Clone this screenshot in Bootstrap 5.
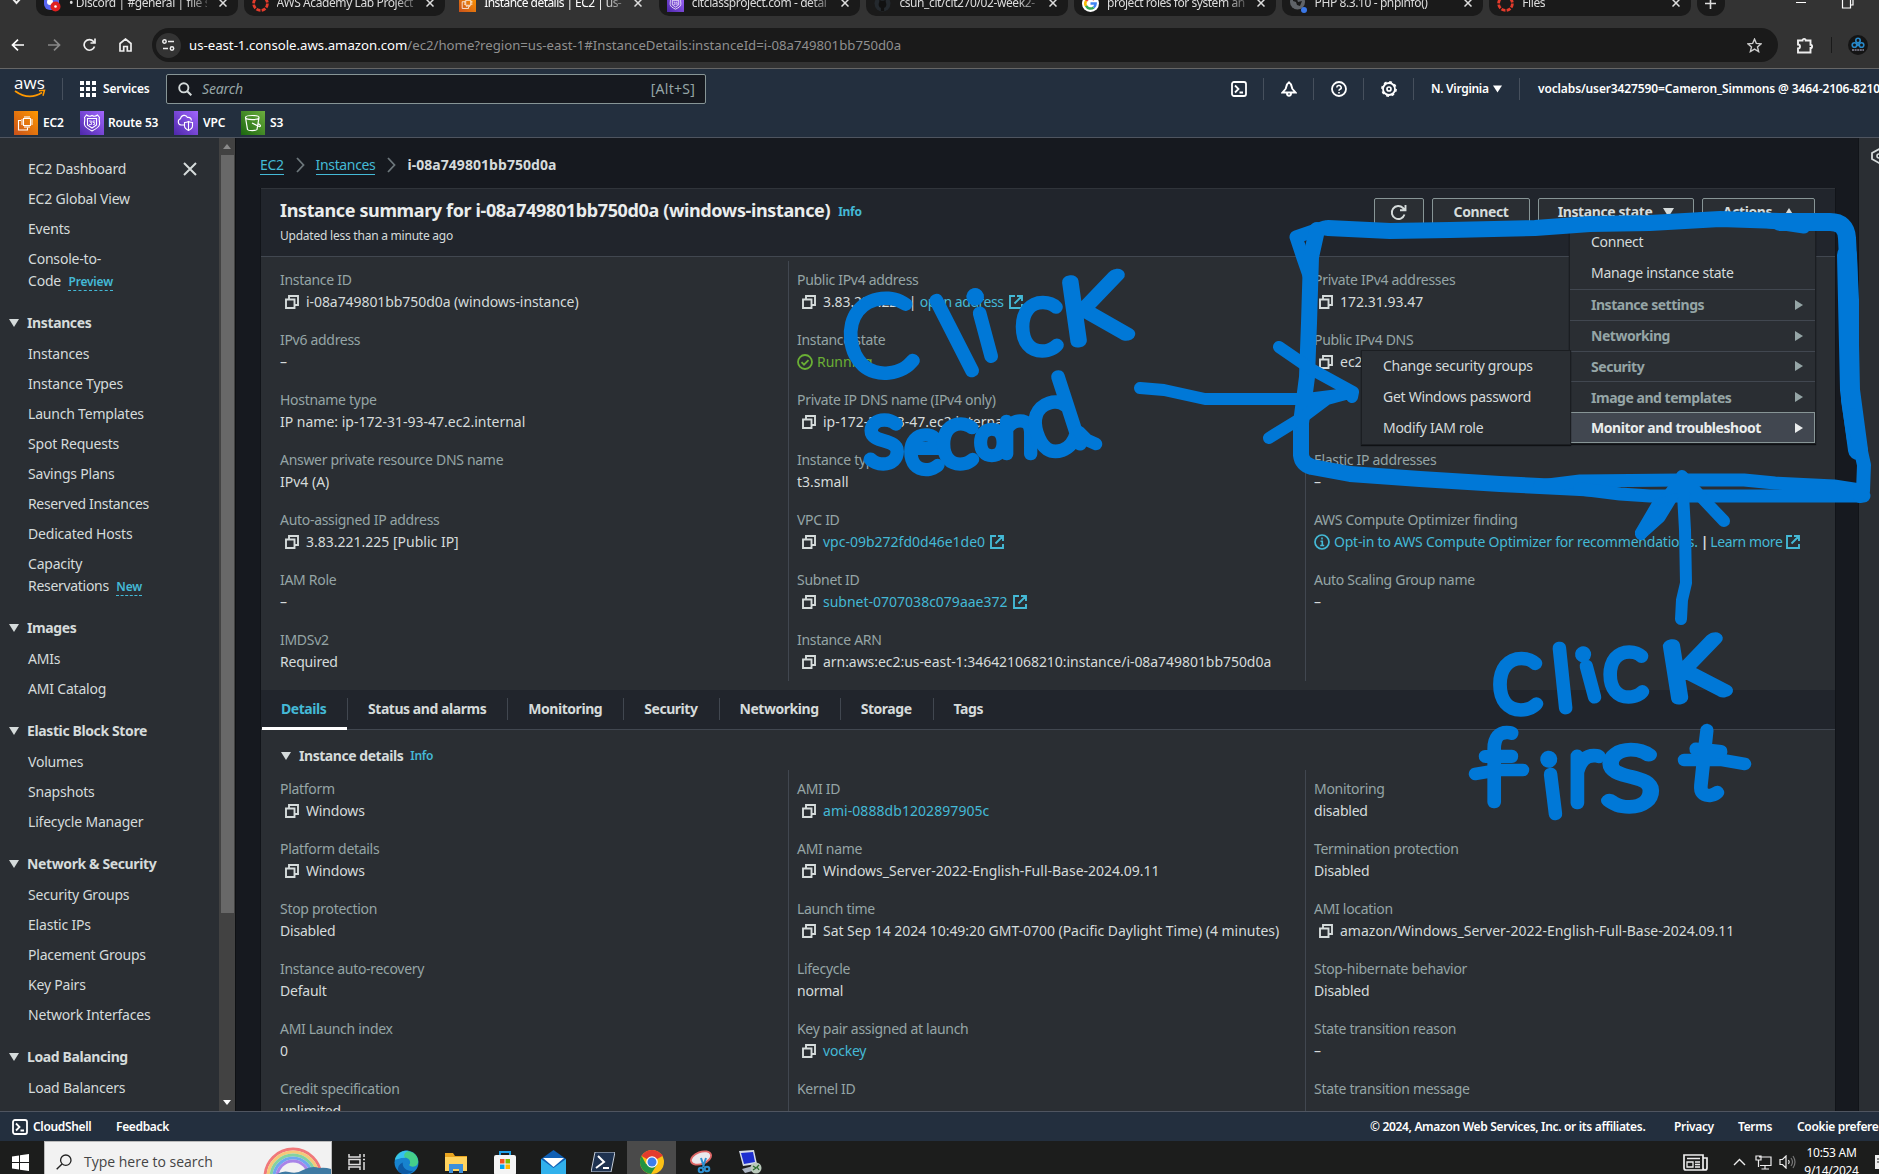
<!DOCTYPE html>
<html lang="en" data-bs-theme="dark">
<head>
<meta charset="utf-8">
<title>Instance details | EC2 | us-east-1</title>
<link href="https://cdn.jsdelivr.net/npm/bootstrap@5.3.0/dist/css/bootstrap.min.css" rel="stylesheet">
<style>
html,body{height:1174px;overflow:hidden}
body{width:1879px;margin:0;background:#16191f;color:#d5dbdb;font:14px/22px "Noto Sans","Open Sans",sans-serif;letter-spacing:-.2px;white-space:nowrap}
svg{display:block;flex:none}
a,a:not([href]):not([class]),a:not([href]):not([class]):hover{color:#44b9d6;text-decoration:none}
/* browser */
.chrome-win{height:68px;background:#333;border-bottom:0}
.tabstrip{height:16px;overflow:hidden;padding-left:36px}
.btab{flex:none;width:201.6px;height:26px;margin-right:6px;background:#1a1a1a;border-radius:10px;padding:0 11px 0 8px;font:12px/16px "Noto Sans",sans-serif;color:#dcdcdc;letter-spacing:-.4px}
.btab.on{background:none;color:#fff}
.btab .ttl{width:138px;margin-left:8px;overflow:hidden;-webkit-mask-image:linear-gradient(90deg,#000 86%,transparent 106%);mask-image:linear-gradient(90deg,#000 86%,transparent 106%)}
.btab .cls{margin-left:auto}
.plus{width:28px;height:26px;border-radius:12px;background:#1a1a1a}
.toolbar{height:34px;margin-top:12px;padding-left:11px}
.omni{width:1626px;height:34px;border-radius:17px;background:#1a1a1a;margin-left:20px;padding:0 16px 0 4px}
.siteinfo{width:25px;height:25px;border-radius:50%;background:#333}
.url{font:13.2px/18px "Noto Sans",sans-serif;letter-spacing:0;color:#8f8f8f;margin-left:8px}
.url b{font-weight:400;color:#fff}
/* console header */
.awsnav{height:70px;background:#232f3e;border-top:1px solid #666;border-bottom:1px solid #4f5560;font-size:12px;font-weight:600;color:#fff;letter-spacing:-.15px}
.awsrow{height:40px;padding-left:14px}
.awsrow>*,.favs>*,.foot>*,.tcell{flex:none}
.vr1{width:1px;height:22px;background:#46505d}
.aws-word{font:500 17px/12px "Open Sans",sans-serif;letter-spacing:.1px;color:#fff;margin-top:-3px}
.srch{width:540px;height:30px;background:#16191f;border:1px solid #879596;border-radius:2px;color:#95a5a6;font-weight:400;font-size:14px;padding:0 10px 0 11px}
.favs{height:24px;padding-left:14px;margin-top:2px}
/* body regions */
.mid{height:973px}
.side{width:219px;background:#2a2e33;padding:20px 0 0 28px;overflow:hidden}
.side div{margin-bottom:8px}
.side .grp{font-weight:700;letter-spacing:-.38px;margin:20px 0 9px -19px}
.side .grp svg{margin-right:8px}
.tag{font-size:12px;font-weight:600;color:#44b9d6;border-bottom:1px dashed #44b9d6;line-height:17px;display:inline-block;margin-left:4px}
.sbar{width:17px;background:#424242;border-right:1px solid #0f1114;padding:6px 0 6px 0}
.sthumb{width:13px;height:758px;background:#686868}
.maincol{width:1622px;padding:0 22px 0 24px;height:973px;overflow:hidden}
.bc{height:50px;padding-top:4px}
.bc a{border-bottom:1px solid #44b9d6;line-height:18px;letter-spacing:-.35px}
.bc b{letter-spacing:.05px}
.panel{width:1576px;background:#2a2e33;border-left:1px solid #111419;border-right:1px solid #111419}
.phead{height:69px;background:#21252c;border-top:1px solid #30343a;border-bottom:1px solid #414750;padding:8px 20px 0 19px;position:relative}
.phead h1{font-size:18px;line-height:26px;font-weight:700;letter-spacing:-.37px;margin:0;color:#eaeded}
.info{font-size:12px;font-weight:700;letter-spacing:-.25px}
.upd{font-size:12px;line-height:25px;letter-spacing:-.23px}
.abtn{height:28px;margin-top:1px;border:1px solid #879596;border-radius:2px;background:#2a2e33;font-weight:700;letter-spacing:-.4px;color:#d5dbdb;margin-right:8px}
.cols{padding-top:4px}
.fcol{border-left:1px solid #414750;padding:8px 0 8px 8px;height:420px}
.fcol.c1{width:527px;border-left:0;padding-left:19px}
.fcol.c2{width:517px}
.fcol.c3{width:530px}
dl{margin:0}
dt{font-weight:400;color:#95a5a6;letter-spacing:-.3px}
dd{margin:0 0 16px;display:flex;align-items:center;height:22px;letter-spacing:0}
dd.wd{letter-spacing:-.22px}
dd>.cp{margin:0 7px 0 5px}
.tabsrow{height:40px;margin-top:9px;background:#21252c;border-bottom:1px solid #414750;font-weight:700;letter-spacing:-.45px}
.tabsrow span{position:relative;padding:8px 21px 0 21px;height:40px}
.tabsrow span+span:before{content:"";position:absolute;left:0;top:8px;width:1px;height:22px;background:#414750}
.tabsrow .act{color:#44b9d6;border-bottom:3px solid #fff;width:85px;padding:8px 0 0 19px}
.menu{position:absolute;left:1308px;top:37px;width:247px;background:#2a2e33;border:1px solid #1b1e22;box-shadow:0 1px 1px #0f1114;z-index:3}
.mi{height:31px;padding:0 12px 0 21px;color:#d5dbdb;letter-spacing:-.28px;line-height:30px}
.mi.sub{height:30.8px;border-top:1px solid #414750;font-weight:700;color:#95a5a6;letter-spacing:-.47px;line-height:29px}
.mi.hot{background:#414750;border:1px solid #879596;color:#eaeded;padding:0 11px 0 21px;margin:0 0 0 -1px;letter-spacing:-.46px}
.menu2{left:1100px;top:161px;width:210px}
.rail{width:21px;background:#2a2e33;border-left:1px solid #111419}
.foot{height:30px;background:#232f3e;border-top:1px solid #4f5560;padding-left:12px;font-size:12px;font-weight:600;color:#fff;letter-spacing:-.33px;overflow:hidden}
.task{height:33px;background:#1c1d1c;overflow:hidden;color:#fff}
.tsearch{flex:none;width:288px;height:42px;background:#f2f2f2;border:1px solid #bbb;color:#444;font:14px/18px "Open Sans",sans-serif;letter-spacing:0}
.tcell{width:49px;height:42px}
.clock{font:12px/18px "Noto Sans",sans-serif;letter-spacing:-.3px;text-align:center}
.ink{position:absolute;left:0;top:0;pointer-events:none;z-index:10}
</style>
</head>
<body>
<svg width="0" height="0" class="position-absolute">
<symbol id="cp" viewBox="0 0 14 14"><path d="M1 4.5h8.5V13H1zM4 4V1h9v9H9.500" fill="none" stroke="#d5dbdb" stroke-width="1.9"/></symbol>
<symbol id="ext" viewBox="0 0 14 14"><path d="M6 1H1v12h12V9M8 1h5v5M12.500 1.500L5.500 8.500" fill="none" stroke="#44b9d6" stroke-width="1.9"/></symbol>
<symbol id="dn" viewBox="0 0 10 8"><path d="M0 0h10L5 8z" fill="currentColor"/></symbol>
<symbol id="rt" viewBox="0 0 8 10"><path d="M0 0v10L8 5z" fill="currentColor"/></symbol>
<symbol id="cs" viewBox="0 0 16 16"><g fill="none" stroke="#fff" stroke-width="1.8"><rect x="1" y="1" width="14" height="14" rx="2"/><path d="M4 4.500L7.500 8 4 11.500M8.500 11.500H12"/></g></symbol>
<symbol id="x" viewBox="0 0 8 8"><path d="M.5.5l7 7M7.500.5l-7 7" stroke="#ddd" stroke-width="1.5" fill="none"/></symbol>
<symbol id="canvas" viewBox="0 0 16 16"><circle cx="8" cy="8" r="6.500" fill="none" stroke="#e43b2c" stroke-width="2.600" stroke-dasharray="3.900 1.200"/></symbol>
<linearGradient id="go" x1="0" y1="1" x2="1" y2="0"><stop stop-color="#c8511b"/><stop offset="1" stop-color="#f90"/></linearGradient>
<linearGradient id="gp" x1="0" y1="1" x2="1" y2="0"><stop stop-color="#4d27aa"/><stop offset="1" stop-color="#a166ff"/></linearGradient>
<linearGradient id="gg" x1="0" y1="1" x2="1" y2="0"><stop stop-color="#1b660f"/><stop offset="1" stop-color="#6cae3e"/></linearGradient>
<symbol id="ec2" viewBox="0 0 24 24"><rect width="24" height="24" fill="url(#go)"/><path d="M9.500 7.500h7v7h-7zM11 7V5m2 2V5m2 2V5m-4 12v-2m2 2v-2m2 2v-2M9 9H7m2 2H7m2 2H7m12-4h-2m2 2h-2m2 2h-2M7 9.500H4.500v9.500h9v-2.500" fill="none" stroke="#fff" stroke-width="1.100"/></symbol>
<symbol id="r53" viewBox="0 0 24 24"><rect width="24" height="24" fill="url(#gp)"/><path d="M12 4.500c2 1.200 4 .8 5.500-.5L19.500 6.500c-1 2 .5 4 0 7C19 16.500 16 18 12 20c-4-2-7-3.500-7.500-6.500-.5-3 1-5 0-7L6.500 4c1.500 1.300 3.500 1.700 5.500.5zM7.500 7.500h9v6.500L12 17l-4.500-3z" fill="none" stroke="#fff" stroke-width="1.100"/><path d="M9 10h2.500l-1 1.500h1v2H9M15 10h-2v1.500h1.500v2H13" fill="none" stroke="#fff" stroke-width=".8"/></symbol>
</svg>

<header class="chrome-win">
 <div class="tabstrip d-flex align-items-end position-relative">
  <svg class="position-absolute" style="left:12px;top:-2px" width="9" height="7"><path d="M.5.5l4 4.500 4-4.500" fill="none" stroke="#eee" stroke-width="2"/></svg>
  <div class="btab d-flex align-items-center"><svg width="17" height="18" viewBox="0 0 17 18"><rect width="15" height="15" y="1" rx="6" fill="#5865f2"/><circle cx="6" cy="8" r="3" fill="#fff"/><circle cx="11.500" cy="12.500" r="5" fill="#e02020"/><circle cx="11.500" cy="12.500" r="1.300" fill="#fff"/></svg><div class="ttl">• Discord | #general | file s</div><svg class="cls" width="8" height="8"><use href="#x"/></svg></div>
  <div class="btab d-flex align-items-center"><svg width="17" height="17"><use href="#canvas"/></svg><div class="ttl">AWS Academy Lab Project</div><svg class="cls" width="8" height="8"><use href="#x"/></svg></div>
  <div class="btab on d-flex align-items-center"><svg width="17" height="17"><use href="#ec2"/></svg><div class="ttl" style="letter-spacing:-.55px">Instance details | EC2 | us-</div><svg class="cls" width="8" height="8"><use href="#x"/></svg></div>
  <div class="btab d-flex align-items-center"><svg width="17" height="17"><use href="#r53"/></svg><div class="ttl">citclassproject.com - detai</div><svg class="cls" width="8" height="8"><use href="#x"/></svg></div>
  <div class="btab d-flex align-items-center"><svg width="17" height="17" viewBox="0 0 16 16"><circle cx="8" cy="8" r="7.500" fill="#24292e"/><path d="M6.500 15v-3C4 11.500 4 8 5 6.500V4.500l2 1h2l2-1v2c1 1.500 1 5-1.500 5.500v3z" fill="#111"/></svg><div class="ttl">csun_cit/cit270/02-week2-</div><svg class="cls" width="8" height="8"><use href="#x"/></svg></div>
  <div class="btab d-flex align-items-center"><svg width="17" height="17" viewBox="0 0 16 16"><circle cx="8" cy="8" r="8" fill="#fff"/><g fill="none" stroke-width="2.400"><path d="M11.500 4.500A4.800 4.800 0 0 0 3.800 5.800" stroke="#ea4335"/><path d="M3.800 5.500a4.800 4.800 0 0 0 0 5" stroke="#fbbc05"/><path d="M3.800 10.300a4.800 4.800 0 0 0 7.200 1.400" stroke="#34a853"/><path d="M8 8h4.800a4.800 4.800 0 0 1-1.700 3.700" stroke="#4285f4"/></g></svg><div class="ttl" style="letter-spacing:-.45px">project roles for system an</div><svg class="cls" width="8" height="8"><use href="#x"/></svg></div>
  <div class="btab d-flex align-items-center"><svg width="17" height="20" viewBox="0 0 17 20"><circle cx="7.500" cy="9" r="7.500" fill="#5f6368"/><path d="M3 5l4 1 1 3 4-1-2 5-3-1-1-3-3-1z" fill="#1a1a1a"/><circle cx="14" cy="17" r="3" fill="#3b78e7"/></svg><div class="ttl">PHP 8.3.10 - phpinfo()</div><svg class="cls" width="8" height="8"><use href="#x"/></svg></div>
  <div class="btab d-flex align-items-center"><svg width="17" height="17"><use href="#canvas"/></svg><div class="ttl">Files</div><svg class="cls" width="8" height="8"><use href="#x"/></svg></div>
  <div class="plus d-flex align-items-center justify-content-center"><svg width="11" height="11"><path d="M5.500 0v11M0 5.500h11" stroke="#ddd" stroke-width="1.600"/></svg></div>
  <svg style="margin:0 0 6px 71px" width="60" height="12"><path d="M0 4.500h10" stroke="#fff"/><path d="M46.500-3v13h8V-3M49-2h8v9h-2" fill="none" stroke="#fff" stroke-width="1.200"/></svg>
 </div>
 <div class="toolbar d-flex align-items-center">
  <svg width="13" height="12"><path d="M7 .7L1.500 6 7 11.300M1.500 6H13" fill="none" stroke="#fff" stroke-width="1.700"/></svg>
  <svg style="margin-left:24px" width="13" height="12"><path d="M6 .7L11.500 6 6 11.300M11.500 6H0" fill="none" stroke="#888" stroke-width="1.700"/></svg>
  <svg style="margin-left:22px" width="13" height="14"><path d="M11.500 8.500A5.300 5.300 0 1 1 10.500 3.500L12 5M12 .5V5H7.500" fill="none" stroke="#eee" stroke-width="1.700"/></svg>
  <svg style="margin-left:23px" width="13" height="14"><path d="M1 5.500L6.500 1 12 5.500V13H8.300V8.500H4.700V13H1z" fill="none" stroke="#eee" stroke-width="1.700"/></svg>
  <div class="omni d-flex align-items-center">
   <div class="siteinfo d-flex align-items-center justify-content-center"><svg width="13" height="12"><g fill="none" stroke="#eee" stroke-width="1.500"><circle cx="2.500" cy="2.500" r="1.700"/><path d="M6 2.500h6M1 9.500h5"/><circle cx="10" cy="9.500" r="1.700"/></g></svg></div>
   <div class="url"><b>us-east-1.console.aws.amazon.com</b>/ec2/home?region=us-east-1#InstanceDetails:instanceId=i-08a749801bb750d0a</div>
   <svg class="ms-auto" width="15" height="15" viewBox="0 0 16 16"><path d="M8 1.200l2 4.600 5 .4-3.800 3.300 1.200 4.900L8 11.800l-4.400 2.600 1.200-4.900L1 6.200l5-.4z" fill="none" stroke="#ccc" stroke-width="1.500"/></svg>
  </div>
  <svg style="margin-left:19px" width="17" height="17"><path d="M1 3.500h4.500a1.600 1.600 0 0 1 3.200 0H13.500v4.300a1.600 1.600 0 0 1 0 3.200V15.500H1V11.500a2 2 0 0 0 0-4z" fill="none" stroke="#eee" stroke-width="1.900"/></svg>
  <div style="width:1px;height:16px;background:#1a1a1a;margin-left:17px"></div>
  <svg style="margin-left:16px" width="20" height="20"><circle cx="10" cy="10" r="10" fill="#141414"/><g fill="none" stroke="#2788c8" stroke-width="1.600"><circle cx="10" cy="5.500" r="2.200"/><circle cx="6.500" cy="10" r="2.300"/><circle cx="13.500" cy="10" r="2.300"/><path d="M10 7.500v2l-2 2M10 9.500l2 2"/></g><path d="M4 15h12" stroke="#889" stroke-width="1.600" stroke-dasharray="2 .6"/></svg>
 </div>
</header>

<nav class="awsnav">
 <div class="awsrow d-flex align-items-center">
  <div><div class="aws-word" style="width:32px">aws</div><svg width="32" height="9"><path d="M1 2Q15 12 28 3.500" fill="none" stroke="#f90" stroke-width="1.800"/><path d="M25 1.700l5.500-.4-1.500 5.500" fill="none" stroke="#f90" stroke-width="1.500"/></svg></div>
  <div class="vr1" style="margin-left:16px"></div>
  <svg style="margin:0 7px 0 17px" width="16" height="16" fill="#fff"><path d="M0 0h4v4H0zM6 0h4v4H6zM12 0h4v4h-4zM0 6h4v4H0zM6 6h4v4H6zM12 6h4v4h-4zM0 12h4v4H0zM6 12h4v4H6zM12 12h4v4h-4z"/></svg>
  <div style="width:63px">Services</div>
  <div class="srch d-flex align-items-center"><svg width="14" height="14"><circle cx="5.800" cy="5.800" r="4.600" fill="none" stroke="#d5dbdb" stroke-width="1.900"/><path d="M9 9l4.300 4.300" stroke="#d5dbdb" stroke-width="2"/></svg><i style="margin-left:10px">Search</i><span class="ms-auto" style="letter-spacing:.25px">[Alt+S]</span></div>
  <svg style="margin-left:525px" width="16" height="16"><use href="#cs"/></svg>
  <div class="vr1" style="margin:0 17px 0 16px"></div>
  <svg width="16" height="16"><path d="M8 1.200C5 3 5.500 6.500 4.500 8L1.500 11.500h13L11.500 8C10.500 6.500 11 3 8 1.200zM6 12.500a2 2.200 0 0 0 4 0" fill="none" stroke="#fff" stroke-width="1.900"/></svg>
  <div class="vr1" style="margin:0 17px 0 16px"></div>
  <svg width="16" height="16"><circle cx="8" cy="8" r="7" fill="none" stroke="#fff" stroke-width="1.800"/><path d="M5.800 6.500a2.200 2 0 1 1 3.200 1.800Q8 8.800 8 9.800M8 11v1.600" fill="none" stroke="#fff" stroke-width="1.600"/></svg>
  <div class="vr1" style="margin:0 17px 0 16px"></div>
  <svg width="16" height="16"><circle cx="8" cy="8" r="6" fill="none" stroke="#fff" stroke-width="1.800"/><circle cx="8" cy="8" r="7.100" fill="none" stroke="#fff" stroke-width="1.600" stroke-dasharray="2.800 2.780"/><circle cx="8" cy="8" r="2" fill="none" stroke="#fff" stroke-width="1.700"/></svg>
  <div class="vr1" style="margin:0 17px 0 16px"></div>
  <div style="width:62px;letter-spacing:-.3px">N. Virginia</div><svg width="9" height="8"><use href="#dn"/></svg>
  <div class="vr1" style="margin:0 18px 0 17px"></div>
  <div style="letter-spacing:-.13px">voclabs/user3427590=Cameron_Simmons @ 3464-2106-8210</div>
 </div>
 <div class="favs d-flex align-items-center">
  <svg width="24" height="24"><use href="#ec2"/></svg><span style="width:42px;padding-left:5px">EC2</span>
  <svg width="24" height="24"><use href="#r53"/></svg><span style="width:70px;padding-left:4px">Route 53</span>
  <svg width="24" height="24"><rect width="24" height="24" fill="url(#gp)"/><path d="M11 14H7a3.200 3.200 0 0 1-.5-6.200C7 4 12 3 13.500 6.500c3-.5 4 1.500 3.800 3M14.500 10.500c2 1 3 1 4 1v3.500c0 2-2 3.500-4 4.500-2-1-4-2.500-4-4.500v-3.500c1 0 2.500 0 4-1zm0 0v9" fill="none" stroke="#fff" stroke-width="1.100"/></svg><span style="width:43px;padding-left:5px">VPC</span>
  <svg width="24" height="24"><rect width="24" height="24" fill="url(#gg)"/><path d="M4.500 6.500l2 12c1 1.500 8.500 1.500 9.500 0l2-12M4.500 6.500c0 2.700 13.500 2.700 13.500 0s-13.500-2.700-13.500 0zM11 12l7 3.500c2.500.5 1.500-2-1-3" fill="none" stroke="#fff" stroke-width="1.200"/></svg><span style="padding-left:5px">S3</span>
 </div>
</nav>

<div class="mid d-flex">
 <aside class="side">
  <div class="d-flex align-items-center">EC2 Dashboard<svg style="margin-left:auto;margin-right:22px" width="14" height="14"><path d="M1 1l12 12M13 1L1 13" stroke="#d5dbdb" stroke-width="2"/></svg></div>
  <div>EC2 Global View</div><div>Events</div><div>Console-to-<br>Code <span class="tag">Preview</span></div>
  <div class="grp d-flex align-items-center"><svg width="10" height="8"><use href="#dn"/></svg>Instances</div>
  <div>Instances</div><div>Instance Types</div><div>Launch Templates</div><div>Spot Requests</div><div>Savings Plans</div><div style="letter-spacing:-.35px">Reserved Instances</div><div>Dedicated Hosts</div><div>Capacity<br><span style="letter-spacing:-.3px">Reservations</span> <span class="tag">New</span></div>
  <div class="grp d-flex align-items-center"><svg width="10" height="8"><use href="#dn"/></svg>Images</div>
  <div>AMIs</div><div>AMI Catalog</div>
  <div class="grp d-flex align-items-center"><svg width="10" height="8"><use href="#dn"/></svg>Elastic Block Store</div>
  <div>Volumes</div><div>Snapshots</div><div>Lifecycle Manager</div>
  <div class="grp d-flex align-items-center"><svg width="10" height="8"><use href="#dn"/></svg>Network &amp; Security</div>
  <div>Security Groups</div><div>Elastic IPs</div><div>Placement Groups</div><div>Key Pairs</div><div>Network Interfaces</div>
  <div class="grp d-flex align-items-center"><svg width="10" height="8"><use href="#dn"/></svg>Load Balancing</div>
  <div>Load Balancers</div>
 </aside>
 <div class="sbar d-flex flex-column align-items-center"><svg width="8" height="5"><path d="M0 5h8L4 0z" fill="#8a8a8a"/></svg><div class="sthumb" style="margin-top:6px"></div><svg class="mt-auto" width="8" height="5"><path d="M0 0h8L4 5z" fill="#fff"/></svg></div>
 <main class="maincol">
  <div class="bc d-flex align-items-center"><a>EC2</a><svg style="margin:0 11px 0 12px" width="9" height="16"><path d="M1 1l6.500 7L1 15" fill="none" stroke="#6d777b" stroke-width="1.800"/></svg><a>Instances</a><svg style="margin:0 11px 0 12px" width="9" height="16"><path d="M1 1l6.500 7L1 15" fill="none" stroke="#6d777b" stroke-width="1.800"/></svg><b>i-08a749801bb750d0a</b></div>
  <section class="panel">
   <div class="phead d-flex">
    <div class="me-auto"><div class="d-flex align-items-center"><h1>Instance summary for i-08a749801bb750d0a (windows-instance)</h1><a class="info" style="margin:3px 0 0 8px">Info</a></div><div class="upd">Updated less than a minute ago</div></div>
    <div class="abtn d-flex align-items-center justify-content-center" style="width:50px"><svg width="18" height="17"><path d="M14.500 10.500A6.500 6.500 0 1 1 13 4l2 2M15.500 1v5.200H10" fill="none" stroke="#d5dbdb" stroke-width="1.900"/></svg></div>
    <div class="abtn d-flex align-items-center justify-content-center" style="width:98px">Connect</div>
    <div class="abtn d-flex align-items-center justify-content-center" style="width:156px">Instance state<svg style="margin-left:11px" width="11" height="9"><use href="#dn"/></svg></div>
    <div class="abtn d-flex align-items-center justify-content-center me-0" style="width:113px">Actions<svg style="margin-left:12px" width="10" height="8"><path d="M0 8h10L5 0z" fill="#d5dbdb"/></svg></div>
    <div class="menu">
     <div class="mi">Connect</div><div class="mi">Manage instance state</div>
     <div class="mi sub d-flex align-items-center justify-content-between">Instance settings<svg width="8" height="10"><use href="#rt"/></svg></div>
     <div class="mi sub d-flex align-items-center justify-content-between">Networking<svg width="8" height="10"><use href="#rt"/></svg></div>
     <div class="mi sub d-flex align-items-center justify-content-between">Security<svg width="8" height="10"><use href="#rt"/></svg></div>
     <div class="mi sub d-flex align-items-center justify-content-between">Image and templates<svg width="8" height="10"><use href="#rt"/></svg></div>
     <div class="mi sub hot d-flex align-items-center justify-content-between">Monitor and troubleshoot<svg width="8" height="10"><use href="#rt"/></svg></div>
    </div>
    <div class="menu menu2"><div class="mi">Change security groups</div><div class="mi">Get Windows password</div><div class="mi">Modify IAM role</div></div>
   </div>
   <div class="cols d-flex">
    <dl class="fcol c1">
     <dt>Instance ID</dt><dd style="letter-spacing:-.07px"><svg class="cp" width="14" height="14"><use href="#cp"/></svg>i-08a749801bb750d0a (windows-instance)</dd>
     <dt>IPv6 address</dt><dd>–</dd>
     <dt>Hostname type</dt><dd>IP name: ip-172-31-93-47.ec2.internal</dd>
     <dt>Answer private resource DNS name</dt><dd>IPv4 (A)</dd>
     <dt>Auto-assigned IP address</dt><dd><svg class="cp" width="14" height="14"><use href="#cp"/></svg>3.83.221.225 [Public IP]</dd>
     <dt>IAM Role</dt><dd>–</dd>
     <dt>IMDSv2</dt><dd class="wd">Required</dd>
    </dl>
    <dl class="fcol c2">
     <dt>Public IPv4 address</dt><dd><svg class="cp" width="14" height="14"><use href="#cp"/></svg><span style="letter-spacing:-.1px">3.83.221.225 |&nbsp;</span><a style="letter-spacing:-.45px">open address</a><svg style="margin-left:5px" width="14" height="14"><use href="#ext"/></svg></dd>
     <dt>Instance state</dt><dd style="color:#6aaf35"><svg style="margin-right:4px" width="16" height="16"><circle cx="8" cy="8" r="7" fill="none" stroke="#6aaf35" stroke-width="1.800"/><path d="M4.500 8.200l2.500 2.500 4.500-4.500" fill="none" stroke="#6aaf35" stroke-width="1.800"/></svg>Running</dd>
     <dt>Private IP DNS name (IPv4 only)</dt><dd><svg class="cp" width="14" height="14"><use href="#cp"/></svg>ip-172-31-93-47.ec2.internal</dd>
     <dt>Instance type</dt><dd>t3.small</dd>
     <dt>VPC ID</dt><dd><svg class="cp" width="14" height="14"><use href="#cp"/></svg><a>vpc-09b272fd0d46e1de0</a><svg style="margin-left:5px" width="14" height="14"><use href="#ext"/></svg></dd>
     <dt>Subnet ID</dt><dd><svg class="cp" width="14" height="14"><use href="#cp"/></svg><a>subnet-0707038c079aae372</a><svg style="margin-left:5px" width="14" height="14"><use href="#ext"/></svg></dd>
     <dt>Instance ARN</dt><dd style="letter-spacing:-.05px"><svg class="cp" width="14" height="14"><use href="#cp"/></svg>arn:aws:ec2:us-east-1:346421068210:instance/i-08a749801bb750d0a</dd>
    </dl>
    <dl class="fcol c3">
     <dt>Private IPv4 addresses</dt><dd><svg class="cp" width="14" height="14"><use href="#cp"/></svg>172.31.93.47</dd>
     <dt>Public IPv4 DNS</dt><dd><svg class="cp" width="14" height="14"><use href="#cp"/></svg>ec2</dd>
     <dt>&nbsp;</dt><dd></dd>
     <dt>Elastic IP addresses</dt><dd>–</dd>
     <dt>AWS Compute Optimizer finding</dt><dd style="letter-spacing:-.21px"><svg style="margin-right:4px" width="16" height="16"><circle cx="8" cy="8" r="7" fill="none" stroke="#44b9d6" stroke-width="1.700"/><path d="M8 3.500v2M6.500 7.300H8.300V11M6.200 11.500h4" fill="none" stroke="#44b9d6" stroke-width="1.600"/></svg><a>Opt-in to AWS Compute Optimizer for recommendations.</a><b style="margin:0 2px 0 3px">|</b><a style="letter-spacing:-.4px">Learn more</a><svg style="margin-left:4px" width="14" height="14"><use href="#ext"/></svg></dd>
     <dt>Auto Scaling Group name</dt><dd>–</dd>
    </dl>
   </div>
   <div class="tabsrow d-flex"><span class="act" style="margin-left:1px">Details</span><span>Status and alarms</span><span>Monitoring</span><span>Security</span><span>Networking</span><span>Storage</span><span>Tags</span></div>
   <div class="d-flex align-items-center" style="padding:15px 0 3px 20px"><svg width="10" height="8"><use href="#dn"/></svg><b style="margin:0 7px 0 8px;letter-spacing:-.45px">Instance details</b><a class="info" style="font-weight:600">Info</a></div>
   <div class="d-flex">
    <dl class="fcol c1">
     <dt>Platform</dt><dd><svg class="cp" width="14" height="14"><use href="#cp"/></svg><span style="letter-spacing:-.15px">Windows</span></dd>
     <dt>Platform details</dt><dd><svg class="cp" width="14" height="14"><use href="#cp"/></svg><span style="letter-spacing:-.15px">Windows</span></dd>
     <dt>Stop protection</dt><dd class="wd">Disabled</dd>
     <dt>Instance auto-recovery</dt><dd class="wd">Default</dd>
     <dt>AMI Launch index</dt><dd>0</dd>
     <dt>Credit specification</dt><dd class="wd">unlimited</dd>
    </dl>
    <dl class="fcol c2">
     <dt>AMI ID</dt><dd style="letter-spacing:.06px"><svg class="cp" width="14" height="14"><use href="#cp"/></svg><a>ami-0888db1202897905c</a></dd>
     <dt>AMI name</dt><dd><svg class="cp" width="14" height="14"><use href="#cp"/></svg>Windows_Server-2022-English-Full-Base-2024.09.11</dd>
     <dt>Launch time</dt><dd style="letter-spacing:-.04px"><svg class="cp" width="14" height="14"><use href="#cp"/></svg>Sat Sep 14 2024 10:49:20 GMT-0700 (Pacific Daylight Time) (4 minutes)</dd>
     <dt>Lifecycle</dt><dd class="wd">normal</dd>
     <dt>Key pair assigned at launch</dt><dd class="wd"><svg class="cp" width="14" height="14"><use href="#cp"/></svg><a>vockey</a></dd>
     <dt>Kernel ID</dt><dd></dd>
    </dl>
    <dl class="fcol c3">
     <dt>Monitoring</dt><dd class="wd">disabled</dd>
     <dt>Termination protection</dt><dd class="wd">Disabled</dd>
     <dt>AMI location</dt><dd><svg class="cp" width="14" height="14"><use href="#cp"/></svg>amazon/Windows_Server-2022-English-Full-Base-2024.09.11</dd>
     <dt>Stop-hibernate behavior</dt><dd class="wd">Disabled</dd>
     <dt>State transition reason</dt><dd>–</dd>
     <dt>State transition message</dt><dd></dd>
    </dl>
   </div>
  </section>
 </main>
 <div class="rail"><svg style="margin:10px 0 0 12px" width="9" height="16" viewBox="0 0 9 16"><path d="M9 1L8 1.200 1 5v6l7 4 1 .2" fill="none" stroke="#d5dbdb" stroke-width="1.800"/><circle cx="8" cy="8" r="2" fill="none" stroke="#d5dbdb" stroke-width="1.600"/></svg></div>
</div>

<footer class="foot d-flex align-items-center">
 <svg width="16" height="16"><use href="#cs"/></svg><span style="width:88px;padding-left:5px">CloudShell</span><span style="width:1254px">Feedback</span>
 <span style="width:304px">© 2024, Amazon Web Services, Inc. or its affiliates.</span><span style="width:64px">Privacy</span><span style="width:59px">Terms</span><span>Cookie preferences</span>
</footer>
<div class="task d-flex align-items-start">
 <div class="d-flex align-items-center" style="flex:none;width:44px;height:42px;padding-left:12px"><svg width="17" height="17" fill="#fff"><path d="M0 2.400L7 1.400V8H0zM8 1.200L17 0v8H8zM0 9h7v6.600l-7-1zM8 9h9v8l-9-1.200z"/></svg></div>
 <div class="tsearch d-flex align-items-center"><svg style="margin:0 12px 0 11px" width="16" height="16"><circle cx="9.800" cy="6.200" r="5.200" fill="none" stroke="#222" stroke-width="1.300"/><path d="M6 10L.7 15.300" stroke="#222" stroke-width="1.400"/></svg>Type here to search
  <svg class="ms-auto" width="68" height="38" viewBox="0 0 68 38"><g fill="none" stroke-width="3"><path d="M2 34a28 28 0 0 1 56 0" stroke="#f0787a"/><path d="M5 34a25 25 0 0 1 50 0" stroke="#f5c979"/><path d="M8 34a22 22 0 0 1 44 0" stroke="#85d2a0"/><path d="M11 34a19 19 0 0 1 38 0" stroke="#6fa8ef"/><path d="M14 34a16 16 0 0 1 32 0" stroke="#a884e8"/></g><path d="M12 32q8-5 14-3 8 2 14-2 10-5 16-2 6-1 12 1v12H12z" fill="#3e7aa3"/></svg></div>
 <div class="tcell d-flex align-items-center justify-content-center"><svg width="18" height="16"><path d="M1 0v3h11V0M1 16v-3h11v3M1 5.500h11v5H1zM16 0v3M16 8v8M15 5.500h2" fill="none" stroke="#ddd" stroke-width="1.500"/></svg></div>
 <div class="tcell d-flex align-items-center justify-content-center" style="padding-left:2px"><svg width="25" height="25" viewBox="0 0 24 24"><circle cx="12" cy="12" r="11.500" fill="#1783cf"/><path d="M1 9C3 1 12-1 18 2.500c5 3 6.500 9 4 12-2 2-6 2-7.500 0 2-2 1-7-4-7C6 7 2 9 1 9z" fill="#45cf8a"/><path d="M1 9C4 2 10 0 14 1c-4 1-5 4-3.500 6.500C6 7 2 10 1 9z" fill="#35c1f1"/><path d="M8.500 12c-1 5 4 9 10 8-4 4-10 4-14 1-2-4 1-8 4-9z" fill="#0c59a4"/></svg></div>
 <div class="tcell d-flex align-items-center justify-content-center" style="padding-left:2px"><svg width="22" height="22"><path d="M0 2h8l2 3h12v15H0z" fill="#e9a520"/><path d="M0 6h22v14H0z" fill="#ffd35e"/><path d="M4 22v-9h14v9h-4v-4H8v4z" fill="#3c8fdb"/></svg></div>
 <div class="tcell d-flex align-items-center justify-content-center" style="padding-left:2px"><svg width="24" height="25"><path d="M7 7V2h10v5" fill="none" stroke="#1fa0e8" stroke-width="2"/><rect y="5" x="1" width="22" height="20" rx="2" fill="#f4f4f4"/><path d="M7 9h4.500v4.500H7z" fill="#f25022"/><path d="M12.500 9H17v4.500h-4.500z" fill="#7fba00"/><path d="M7 14.500h4.500V19H7z" fill="#00a4ef"/><path d="M12.500 14.500H17V19h-4.500z" fill="#ffb900"/></svg></div>
 <div class="tcell d-flex align-items-center justify-content-center" style="padding-left:2px"><svg width="25" height="24"><path d="M0 9L12.500 0 25 9v15H0z" fill="#0f5fb4"/><path d="M2 8h21l-10.500 9z" fill="#fff"/><path d="M0 9l12.500 9L25 9v15H0z" fill="#31b1ec"/></svg></div>
 <div class="tcell d-flex align-items-center justify-content-center" style="padding-left:2px"><svg width="24" height="20"><path d="M4 0h20l-4 20H0z" fill="#1e3250" stroke="#c4ccd8"/><path d="M7 4l6 6-8 6M12 16h6" fill="none" stroke="#fff" stroke-width="2"/></svg></div>
 <div class="tcell d-flex align-items-center justify-content-center" style="background:#4a4a4a;margin-left:1px"><svg width="24" height="24" viewBox="0 0 24 24"><circle cx="12" cy="12" r="12" fill="#fbc116"/><path d="M12 12L1.600 6A12 12 0 0 1 22.400 6z" fill="#e33b2e"/><path d="M1.600 6A12 12 0 0 0 11 24l6-9.500L6 14z" fill="#229342"/><path d="M1.600 6L12 4h10l.4 2H12z" fill="#e33b2e"/><circle cx="12" cy="12" r="5.800" fill="#fff"/><circle cx="12" cy="12" r="4.500" fill="#3b7ded"/></svg></div>
 <div class="tcell d-flex align-items-center justify-content-center"><svg width="25" height="24"><ellipse cx="13" cy="8" rx="10.500" ry="6" fill="#e9e9ee" stroke="#d66" stroke-width="1.800" transform="rotate(-20 13 8)"/><g fill="none" stroke="#2e8fd0" stroke-width="2"><path d="M13 8l3 9M18 8l-3 9"/><circle cx="13" cy="20" r="2.300"/><circle cx="19" cy="19" r="2.300"/></g></svg></div>
 <div class="tcell d-flex align-items-center justify-content-center"><svg width="24" height="24"><path d="M1 1l15-1 3 14-14 2z" fill="#d4dbe8"/><path d="M3 3l12-1 2 10-11 2z" fill="#1d2fd0"/><path d="M4 19l11-3 3 4-11 3z" fill="#aab3c0"/><circle cx="18" cy="18" r="5.500" fill="#b9c8ba"/><path d="M15 16l3 2-3 2M21 15l-2 2 2 3" fill="none" stroke="#2b6b2e" stroke-width="1.300"/></svg></div>
 <div class="d-flex align-items-center ms-auto" style="height:42px">
  <svg width="25" height="17"><path d="M20 4h4v10a2 2 0 0 1-4 0zM1 1h19v15H3a2 2 0 0 1-2-2z" fill="none" stroke="#eee" stroke-width="1.700"/><path d="M4 4.500h13M4 8h6v5H4zM12 8h5M12 10.500h5M12 13h5" fill="none" stroke="#eee" stroke-width="1.300"/></svg>
  <svg style="margin-left:25px" width="13" height="8"><path d="M1 7l5.500-5.500L12 7" fill="none" stroke="#eee" stroke-width="1.400"/></svg>
  <svg style="margin-left:9px" width="17" height="15"><path d="M4 2h12v8.500H5M10 10.500V14M6.500 14H14M1 1h5v4H1zM3.500 5v7" fill="none" stroke="#eee" stroke-width="1.200"/></svg>
  <svg style="margin-left:7px" width="17" height="14"><path d="M1 4.500h2.500L7 1v12L3.500 9.500H1z" fill="none" stroke="#eee" stroke-width="1.200"/><path d="M9.500 5q1.500 2 0 4" fill="none" stroke="#eee" stroke-width="1.200"/><path d="M12 3q3 4 0 8M14 1q4 6 0 12" fill="none" stroke="#777" stroke-width="1.200"/></svg>
  <div class="clock" style="width:71px">10:53 AM<br>9/14/2024</div>
  <div style="width:12px;padding-left:8px"><svg width="5" height="14"><rect width="5" height="14" fill="#eee"/><path d="M2 4h3M2 7h3" stroke="#1c1d1c"/></svg></div>
 </div>
</div>

<!-- marker annotations over the page -->
<svg class="ink" width="1879" height="1174" fill="none" stroke="#0078d7" stroke-linecap="round" stroke-linejoin="round">
 <path stroke-width="13" d="M1311 281L1303 258L1296 237L1325 227"/>
 <path stroke-width="16" d="M1328 228L1390 231L1450 230L1535 228L1590 224L1650 223L1720 219L1780 221L1806 223M1317 230L1311 257L1309 323L1307 377L1301 423L1301 455Q1302 464 1312 467L1350 474L1420 479L1500 484L1560 487L1600 489"/>
 <path stroke-width="13" d="M1700 219L1750 219L1804 227M1540 486L1580 481L1680 480L1744 480L1775 483L1834 486L1860 490"/>
 <path stroke-width="13" d="M1580 489L1620 494L1650 496L1864 496"/>
 <path stroke-width="18" d="M1780 222L1830 222Q1846 222 1847 238L1850 300L1850 400L1856 440"/>
 <path stroke-width="20" d="M1847 255L1850 390L1858 450"/>
 <path stroke-width="14" d="M1853 415L1864 465L1863 491L1860 496"/>
 <path stroke-width="12" d="M1140 388L1164 390L1205 399L1307 399L1339 395M1352 397L1353 392L1311 369L1279 347M1269 438L1303 417L1327 399L1353 392"/>
 <path stroke-width="12" d="M1681 619L1682 600L1686 583L1685 530L1682 476L1704 500L1724 521M1680 480L1660 507L1641 534"/>
 <path fill="#0078d7" stroke-width="6" d="M1655 503L1638 532L1643 536L1662 519L1676 496z"/>
 <g font-family="Lato" font-weight="100" stroke-width="12.500" fill="#0078d7">
  <text><tspan x="847" y="377" font-size="106" rotate="-6">C</tspan><tspan x="962" y="376" font-size="110" rotate="-27">l</tspan><tspan x="982" y="359" font-size="92" rotate="-15">i</tspan><tspan x="1016" y="351" font-size="98" rotate="0">c</tspan></text>
  <text transform="translate(1066 343) rotate(-8) scale(1.220 1)" font-size="86">K</text>
  <text><tspan x="865" y="464" font-size="90">s</tspan><tspan x="906" y="470" font-size="72">e</tspan><tspan x="938" y="464" font-size="83">c</tspan><tspan x="977" y="456" font-size="54">o</tspan><tspan x="1000" y="454" font-size="68">n</tspan><tspan x="1038" y="458" font-size="99" rotate="-18">d</tspan></text>
  <path d="M1079 432L1087 440 1096 444M1475 774L1499 770H1523M1684 760L1722 760 1745 764"/>
  <text><tspan x="1493" y="710" font-size="104">c</tspan><tspan x="1557" y="709" font-size="84" rotate="-6">l</tspan><tspan x="1588" y="699" font-size="66" rotate="-15">i</tspan><tspan x="1604" y="697" font-size="92">c</tspan></text>
  <text transform="translate(1668 700) rotate(-9) scale(1.280 1)" font-size="76">K</text>
  <text><tspan x="1482" y="802" font-size="98">f</tspan><tspan x="1547" y="815" font-size="82" rotate="-7">i</tspan><tspan x="1568" y="803" font-size="96">r</tspan></text>
  <text transform="translate(1601 807) scale(1.200 1)" font-size="116">s</text>
  <text x="1688" y="793" font-size="96" rotate="6">t</text>
  <g stroke="none"><circle cx="976" cy="296" r="7"/><circle cx="1583" cy="655" r="7"/><circle cx="1548" cy="760" r="7"/></g>
 </g>
</svg>
<script src="https://cdn.jsdelivr.net/npm/bootstrap@5.3.0/dist/js/bootstrap.bundle.min.js"></script>
</body>
</html>
